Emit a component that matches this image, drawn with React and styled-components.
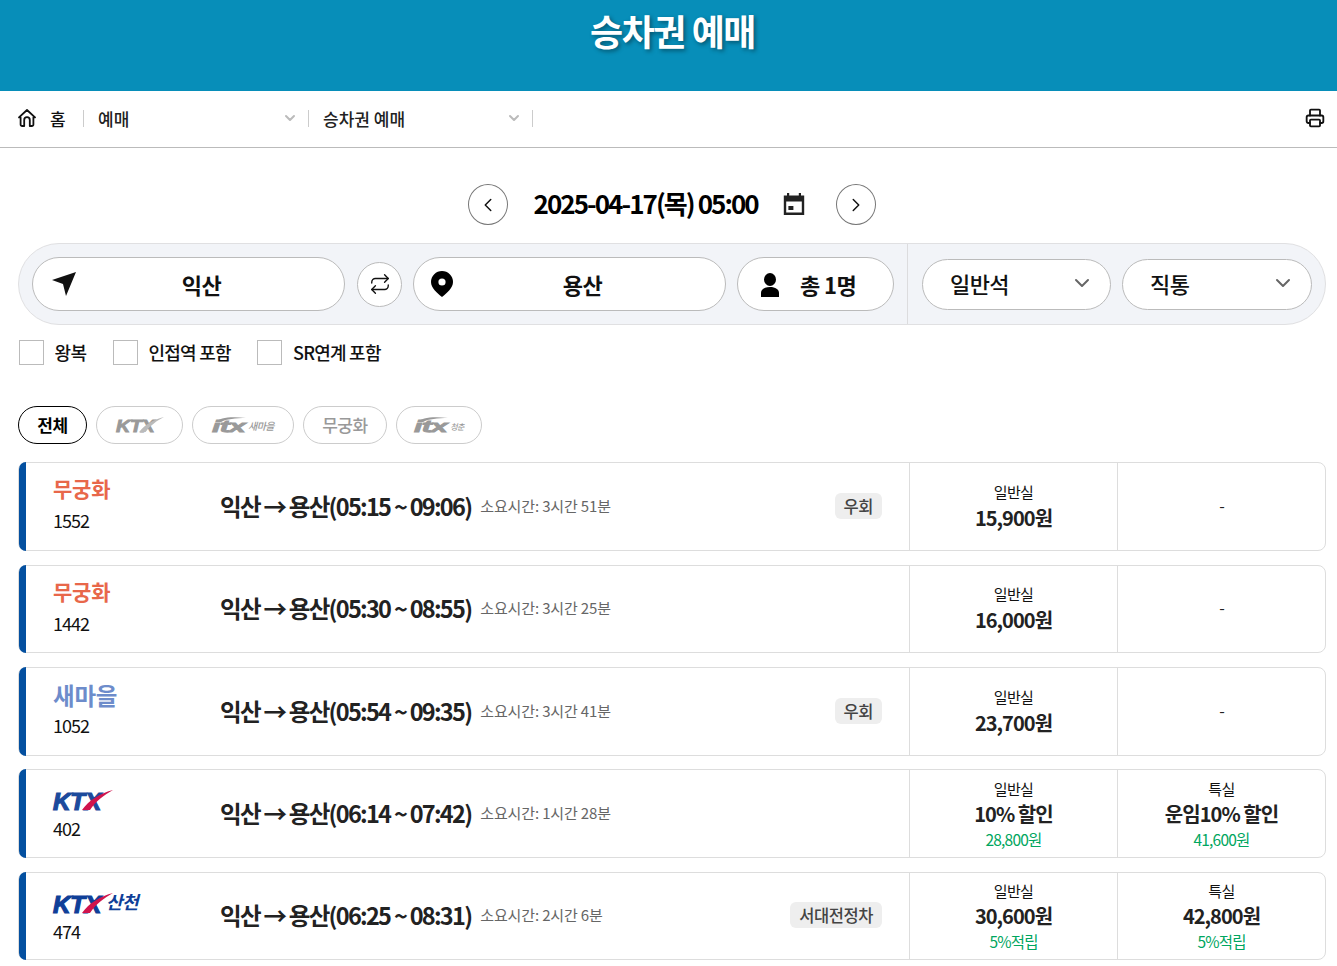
import React from "react";
import styled, { createGlobalStyle } from "styled-components";
import { Repeat, ChevronLeft, ChevronRight, ChevronDown, Printer } from "lucide-react";

const GlobalStyle = createGlobalStyle`
  html, body { margin: 0; padding: 0; background: #fff; }
  body { font-family: "Noto Sans CJK KR", "Noto Sans", sans-serif; color: #111; }
  * { box-sizing: border-box; }
`;

/* header */
const TopBar = styled.header`
  height: 91px;
  background: #078eb9;
  display: flex;
  justify-content: center;
  padding: 4px 0 0 8px;
`;
const Title = styled.h1`
  margin: 0;
  font-size: 36px;
  line-height: 52px;
  height: 52px;
  font-weight: 700;
  letter-spacing: -1.5px;
  color: #fff;
  text-shadow: 2px 2px 4px rgba(0, 0, 0, 0.4);
`;

/* breadcrumb */
const Crumbs = styled.nav`
  height: 57px;
  border-bottom: 1px solid #bbb;
  display: flex;
  align-items: center;
  padding: 0 12px 2px 18px;
  font-size: 17px;
  font-weight: 500;
  letter-spacing: 0;
`;
const HomeItem = styled.div`
  display: flex;
  align-items: center;
  gap: 14px;
  width: 65px;
`;
const CrumbItem = styled.div`
  width: ${(p) => p.$width}px;
  height: 17px;
  padding: 0 10px 0 14px;
  border-left: 1px solid #ccc;
  display: flex;
  align-items: center;
  justify-content: space-between;
  color: #222;
`;
const CrumbEnd = styled.div`
  height: 17px;
  border-left: 1px solid #ccc;
  margin-right: auto;
`;

/* date */
const DateRow = styled.div`
  height: 95px;
  padding: 36px 0 0 6px;
  display: flex;
  justify-content: center;
  align-items: flex-start;
`;
const RoundButton = styled.button`
  width: 40px;
  height: 41px;
  padding: 0;
  border: 1px solid #777;
  border-radius: 50%;
  background: #fff;
  display: flex;
  align-items: center;
  justify-content: center;
  color: #111;
`;
const DateText = styled.div`
  margin-left: 26px;
  width: 248px;
  font-size: 26px;
  line-height: 37px;
  font-weight: 700;
  letter-spacing: -1.95px;
  color: #000;
  white-space: nowrap;
`;
const CalendarSlot = styled.div`
  width: 54px;
  height: 41px;
  padding-bottom: 1px;
  display: flex;
  align-items: center;
`;

/* search bar */
const SearchBar = styled.section`
  margin: 0 11px 0 18px;
  height: 82px;
  border: 1px solid #e0e0e2;
  border-radius: 41px;
  background: #f2f4f8;
  display: flex;
  align-items: center;
  padding-left: 13px;
`;
const PlacePill = styled.div`
  position: relative;
  width: ${(p) => p.$width}px;
  height: 54px;
  margin-right: ${(p) => p.$gap}px;
  padding-left: 26px;
  flex: none;
  border: 1px solid #bbb;
  border-radius: 27px;
  background: #fff;
  display: flex;
  align-items: center;
  justify-content: center;
  font-size: 22px;
  font-weight: 700;
  letter-spacing: -0.6px;
`;
const PillIcon = styled.span`
  position: absolute;
  left: ${(p) => p.$left}px;
  top: 50%;
  transform: translateY(-50%);
  display: flex;
`;
const SwapButton = styled.div`
  width: 45px;
  height: 45px;
  flex: none;
  margin-right: 11px;
  border: 1px solid #bbb;
  border-radius: 50%;
  background: #fff;
  display: flex;
  align-items: center;
  justify-content: center;
`;
const PeoplePill = styled(PlacePill)`
  justify-content: flex-start;
  padding-left: 62px;
  margin-right: 0;
`;
const SelectArea = styled.div`
  margin-left: 13px;
  align-self: stretch;
  border-left: 1px solid #dcdcde;
  padding-left: 14px;
  display: flex;
  align-items: center;
  gap: 11px;
`;
const SelectPill = styled.div`
  width: ${(p) => p.$width}px;
  height: 51px;
  border: 1px solid #bbb;
  border-radius: 26px;
  background: #fff;
  display: flex;
  align-items: center;
  justify-content: space-between;
  padding: 0 16px 2px 27px;
  font-size: 22px;
  font-weight: 500;
  letter-spacing: -0.6px;
`;

/* options */
const Options = styled.div`
  display: flex;
  padding: 15px 0 0 19px;
  height: 81px;
`;
const Option = styled.label`
  display: flex;
  align-items: flex-start;
  margin-right: 26.6px;
  font-size: 18px;
  line-height: 25px;
  font-weight: 500;
  letter-spacing: -0.75px;
  color: #111;
`;
const Box = styled.span`
  width: 25px;
  height: 25px;
  margin-right: 10.6px;
  border: 1px solid #bbb;
  background: #fff;
`;

/* filters */
const Filters = styled.div`
  display: flex;
  gap: 9px;
  padding-left: 18px;
  height: 56.3px;
`;
const Chip = styled.button`
  width: ${(p) => p.$width}px;
  height: 38px;
  padding: 0 0 2px;
  border: 1px solid ${(p) => (p.$active ? "#000" : "#ccc")};
  border-radius: 19px;
  background: #fff;
  color: ${(p) => (p.$active ? "#000" : "#999")};
  font-family: inherit;
  font-size: 17px;
  font-weight: ${(p) => (p.$active ? 700 : 500)};
  letter-spacing: -0.4px;
  display: flex;
  align-items: center;
  justify-content: center;
`;

/* logos */
const Logo = styled.span`
  display: inline-flex;
  align-items: flex-end;
  line-height: 1;
  white-space: nowrap;
`;
const LogoArt = styled.svg`
  overflow: visible;
`;
const LogoSub = styled.span`
  font-size: ${(p) => p.$size}px;
  line-height: 1.2;
  font-style: italic;
  font-weight: ${(p) => p.$weight};
  letter-spacing: -0.5px;
  margin-left: ${(p) => p.$left}px;
  color: ${(p) => p.$color};
`;

/* train list */
const List = styled.div`
  margin: 0 11px 0 18px;
  display: flex;
  flex-direction: column;
  gap: 13.75px;
`;
const Row = styled.article`
  height: 88.6px;
  display: flex;
  border: 1px solid #ddd;
  border-radius: 8px;
  background: #fff;
`;
const RowBar = styled.div`
  width: 7px;
  flex: none;
  margin: -1px 0;
  border-radius: 7px 0 0 7px;
  background: #0450a0;
`;
const TrainCell = styled.div`
  width: 194px;
  flex: none;
  padding: ${(p) => (p.$logo ? "17px" : "9px")} 0 0 27px;
`;
const TrainName = styled.div`
  height: ${(p) => (p.$logo ? "25px" : "32px")};
  padding-top: ${(p) => (p.$large ? "4px" : "0")};
  display: flex;
  align-items: center;
  font-size: ${(p) => (p.$large ? 23.5 : 21)}px;
  font-weight: 700;
  letter-spacing: -0.2px;
  color: ${(p) => p.$color};
`;
const TrainNumber = styled.div`
  margin-top: 3px;
  font-size: 18px;
  line-height: 27px;
  letter-spacing: -1px;
  color: #111;
`;
const RouteCell = styled.div`
  flex: 1;
  display: flex;
  align-items: center;
  padding: 0 27px 1px 0;
  min-width: 0;
`;
const RouteText = styled.div`
  font-size: 23.5px;
  font-weight: 700;
  letter-spacing: -1.72px;
  color: #222;
  white-space: nowrap;
`;
const Duration = styled.div`
  margin-left: 9px;
  padding-bottom: 1px;
  font-size: 15px;
  letter-spacing: -0.15px;
  color: #666;
  white-space: nowrap;
`;
const Tag = styled.div`
  margin-left: auto;
  height: 26px;
  padding: 0 9px;
  border-radius: 6px;
  background: #eee;
  font-size: 16.5px;
  line-height: 26px;
  font-weight: 500;
  letter-spacing: -0.45px;
  color: #444;
`;
const FareCell = styled.div`
  width: 208px;
  flex: none;
  padding-top: ${(p) => (p.$plain ? "2px" : "0")};
  border-left: 1px solid #ddd;
  display: flex;
  flex-direction: column;
  align-items: center;
  justify-content: center;
`;
const SeatLabel = styled.div`
  font-size: 15px;
  line-height: 20px;
  letter-spacing: -0.6px;
  color: #111;
`;
const Price = styled.div`
  font-size: 20px;
  line-height: ${(p) => (p.$plain ? "31.5px" : "30px")};
  font-weight: 700;
  letter-spacing: -0.95px;
  color: #222;
`;
const Note = styled.div`
  font-size: 15.5px;
  line-height: 20px;
  letter-spacing: -0.8px;
  color: #00a660;
`;
const Dash = styled.div`
  margin-top: -5px;
  padding-left: 1px;
  font-size: 16px;
  color: #222;
`;

/* icons */
const HomeIcon = () => (
  <svg width="18" height="18" viewBox="0 0 18 18" fill="none" stroke="#111" strokeWidth="1.8" strokeLinejoin="round">
    <path d="M1 8.4 9 1l8 7.4h-1.6v7a1.6 1.6 0 0 1-1.6 1.6h-2V11a2.8 2.8 0 0 0-5.6 0v6h-2a1.6 1.6 0 0 1-1.6-1.6v-7H1Z" />
  </svg>
);
const CalendarIcon = () => (
  <svg width="24" height="24" viewBox="0 0 24 24">
    <path fill="#222" fillRule="evenodd" d="M5 1h2.2v2.4h9.6V1H19v2.4h3.2V23H1.8V3.4H5V1Zm-.8 8.4V20.6h15.6V9.4H4.2Z" />
    <rect x="6.4" y="14" width="5" height="4" fill="#222" />
  </svg>
);
const SendIcon = () => (
  <svg width="26" height="26" viewBox="0 0 26 26">
    <path fill="#111" d="M25 1 1 9l11 4 3 12L25 1Z" />
  </svg>
);
const PinIcon = () => (
  <svg width="24" height="28" viewBox="0 0 24 28">
    <path fill="#000" fillRule="evenodd" d="M12 1a11 11 0 0 1 11 11c0 6-6 11-11 15C7 23 1 18 1 12A11 11 0 0 1 12 1Zm0 7.4a3.6 3.6 0 1 0 0 7.2 3.6 3.6 0 0 0 0-7.2Z" />
  </svg>
);
const PersonIcon = () => (
  <svg width="20" height="26" viewBox="0 -2 20 26">
    <ellipse cx="10" cy="6.5" rx="6" ry="6.5" fill="#000" />
    <path fill="#000" d="M1 24v-4c0-3.6 3.6-6 9-6s9 2.4 9 6v4H1Z" />
  </svg>
);

/* KTX wordmark: live text stretched to the logo's width, with the swoosh drawn over it */
const KtxLogo = ({ color, red, width = 60, height = 20, sub }) => (
  <Logo>
    <LogoArt width={width} height={height} viewBox="0 0 60 20" preserveAspectRatio="none">
      <text
        x="0"
        y="20"
        fontFamily="Liberation Sans, sans-serif"
        fontWeight="700"
        fontStyle="italic"
        fontSize="23"
        textLength="48"
        lengthAdjust="spacingAndGlyphs"
        fill={color}
        stroke={color}
        strokeWidth="1.2"
      >
        KTX
      </text>
      <path fill={red} d="M29 20C36 10 48 3 60 0 51 5 43 11 37 20H29Z" />
    </LogoArt>
    {sub && <LogoSub $size={18} $weight={700} $left={-7} $color="#0f3f98">{sub}</LogoSub>}
  </Logo>
);

const ItxLogo = ({ sub, subSize }) => (
  <Logo>
    <LogoArt width="34" height="16" viewBox="0 0 34 16">
      <text
        x="0"
        y="16"
        fontFamily="Liberation Sans, sans-serif"
        fontWeight="700"
        fontStyle="italic"
        fontSize="17"
        textLength="33"
        lengthAdjust="spacingAndGlyphs"
        fill="#999"
        stroke="#999"
        strokeWidth="0.8"
      >
        itx
      </text>
      <path fill="#999" d="M4 6C7 2 18 0 34 2 24 2 14 3 9 6H4Z" />
    </LogoArt>
    <LogoSub $size={subSize} $weight={500} $left={2} $color="#999">{sub}</LogoSub>
  </Logo>
);

const trains = [
  { name: "무궁화", color: "#e8674a", no: "1552", route: "익산 → 용산(05:15 ~ 09:06)", time: "소요시간: 3시간 51분", tag: "우회", fare: [{ label: "일반실", price: "15,900원" }, null] },
  { name: "무궁화", color: "#e8674a", no: "1442", route: "익산 → 용산(05:30 ~ 08:55)", time: "소요시간: 3시간 25분", fare: [{ label: "일반실", price: "16,000원" }, null] },
  { name: "새마을", color: "#6d8ccb", large: true, no: "1052", route: "익산 → 용산(05:54 ~ 09:35)", time: "소요시간: 3시간 41분", tag: "우회", fare: [{ label: "일반실", price: "23,700원" }, null] },
  { logo: "ktx", no: "402", route: "익산 → 용산(06:14 ~ 07:42)", time: "소요시간: 1시간 28분", fare: [{ label: "일반실", price: "10% 할인", note: "28,800원" }, { label: "특실", price: "운임10% 할인", note: "41,600원" }] },
  { logo: "sancheon", no: "474", route: "익산 → 용산(06:25 ~ 08:31)", time: "소요시간: 2시간 6분", tag: "서대전정차", fare: [{ label: "일반실", price: "30,600원", note: "5%적립" }, { label: "특실", price: "42,800원", note: "5%적립" }] },
];

function Fare({ fare }) {
  const plain = !fare || !fare.note;
  return (
    <FareCell $plain={plain}>
      {fare ? (
        <>
          <SeatLabel>{fare.label}</SeatLabel>
          <Price $plain={plain}>{fare.price}</Price>
          {fare.note && <Note>{fare.note}</Note>}
        </>
      ) : (
        <Dash>-</Dash>
      )}
    </FareCell>
  );
}

function App() {
  return (
    <>
      <GlobalStyle />
      <TopBar>
        <Title>승차권 예매</Title>
      </TopBar>

      <Crumbs>
        <HomeItem><HomeIcon />홈</HomeItem>
        <CrumbItem $width={225}>예매<ChevronDown size={16} color="#bbb" strokeWidth={3} /></CrumbItem>
        <CrumbItem $width={224}>승차권 예매<ChevronDown size={16} color="#bbb" strokeWidth={3} /></CrumbItem>
        <CrumbEnd />
        <Printer size={20} color="#111" strokeWidth={2.2} />
      </Crumbs>

      <DateRow>
        <RoundButton><ChevronLeft size={22} strokeWidth={1.6} /></RoundButton>
        <DateText>2025-04-17(목) 05:00</DateText>
        <CalendarSlot><CalendarIcon /></CalendarSlot>
        <RoundButton><ChevronRight size={22} strokeWidth={1.6} /></RoundButton>
      </DateRow>

      <SearchBar>
        <PlacePill $width={313} $gap={12}>
          <PillIcon $left={18}><SendIcon /></PillIcon>
          익산
        </PlacePill>
        <SwapButton><Repeat size={22} color="#111" strokeWidth={1.5} /></SwapButton>
        <PlacePill $width={313} $gap={11}>
          <PillIcon $left={16}><PinIcon /></PillIcon>
          용산
        </PlacePill>
        <PeoplePill $width={157} $gap={0}>
          <PillIcon $left={22}><PersonIcon /></PillIcon>
          총 1명
        </PeoplePill>
        <SelectArea>
          <SelectPill $width={189}>일반석<ChevronDown size={24} color="#666" strokeWidth={2} /></SelectPill>
          <SelectPill $width={190}>직통<ChevronDown size={24} color="#666" strokeWidth={2} /></SelectPill>
        </SelectArea>
      </SearchBar>

      <Options>
        <Option><Box />왕복</Option>
        <Option><Box />인접역 포함</Option>
        <Option><Box />SR연계 포함</Option>
      </Options>

      <Filters>
        <Chip $width={69} $active>전체</Chip>
        <Chip $width={87}><KtxLogo color="#999" red="#bbb" width={48} height={15} /></Chip>
        <Chip $width={102}><ItxLogo sub="새마을" subSize={10} /></Chip>
        <Chip $width={84}>무궁화</Chip>
        <Chip $width={86}><ItxLogo sub="청춘" subSize={8} /></Chip>
      </Filters>

      <List>
        {trains.map((t) => (
          <Row key={t.no}>
            <RowBar />
            <TrainCell $logo={t.logo}>
              <TrainName $logo={t.logo} $large={t.large} $color={t.color}>
                {t.logo === "ktx" && <KtxLogo color="#1c4a9c" red="#d0144c" />}
                {t.logo === "sancheon" && <KtxLogo color="#0f3f98" red="#d0144c" sub="산천" />}
                {!t.logo && t.name}
              </TrainName>
              <TrainNumber>{t.no}</TrainNumber>
            </TrainCell>
            <RouteCell>
              <RouteText>{t.route}</RouteText>
              <Duration>{t.time}</Duration>
              {t.tag && <Tag>{t.tag}</Tag>}
            </RouteCell>
            <Fare fare={t.fare[0]} />
            <Fare fare={t.fare[1]} />
          </Row>
        ))}
      </List>
    </>
  );
}

export default App;
